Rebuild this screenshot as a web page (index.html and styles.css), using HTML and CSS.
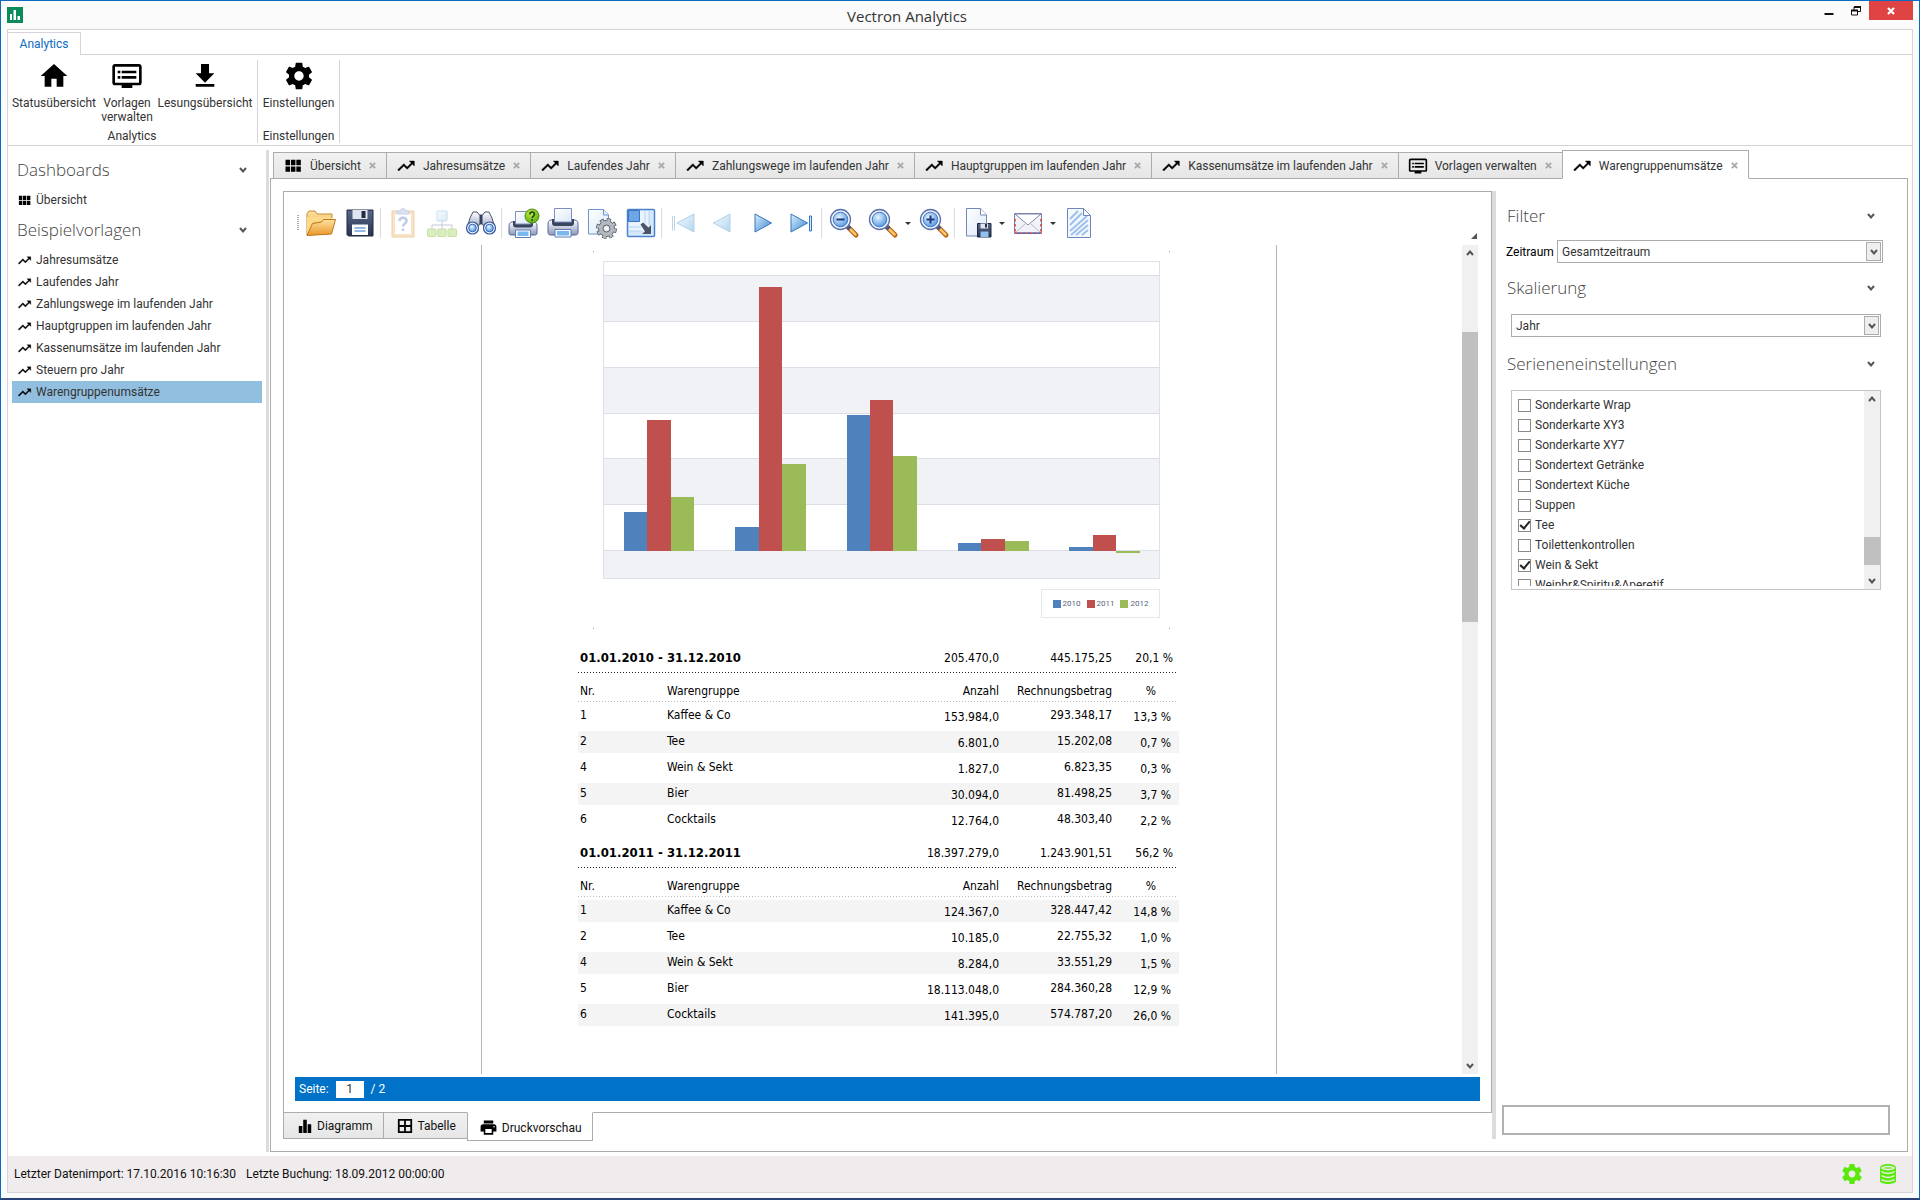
FILE: index.html
```html
<!DOCTYPE html>
<html lang="de">
<head>
<meta charset="utf-8">
<title>Vectron Analytics</title>
<link rel="stylesheet" href="styles.css">
</head>
<body>
<svg class="sprite" aria-hidden="true">
  <defs>
    <linearGradient id="g-blue" x1="0" y1="0" x2="1" y2="1"><stop offset="0" stop-color="#d9efff"/><stop offset="1" stop-color="#3f87d0"/></linearGradient>
    <linearGradient id="g-pale" x1="0" y1="0" x2="1" y2="1"><stop offset="0" stop-color="#f2f9fe"/><stop offset="1" stop-color="#b4d6ee"/></linearGradient>
    <linearGradient id="g-page" x1="0" y1="0" x2="1" y2="1"><stop offset="0" stop-color="#ffffff"/><stop offset="1" stop-color="#dbe8f8"/></linearGradient>
    <linearGradient id="g-gold" x1="0" y1="0" x2="0" y2="1"><stop offset="0" stop-color="#fee3a0"/><stop offset="1" stop-color="#e8962a"/></linearGradient>
    <linearGradient id="g-steel" x1="0" y1="0" x2="0" y2="1"><stop offset="0" stop-color="#ffffff"/><stop offset="1" stop-color="#8a97b8"/></linearGradient>
    <linearGradient id="g-navy" x1="0" y1="0" x2="0" y2="1"><stop offset="0" stop-color="#5a6888"/><stop offset="1" stop-color="#27324e"/></linearGradient>
    <radialGradient id="g-lens" cx=".4" cy=".35" r=".7"><stop offset="0" stop-color="#e6f6ff"/><stop offset="1" stop-color="#4c94e0"/></radialGradient>
    <radialGradient id="g-green" cx=".4" cy=".3" r=".8"><stop offset="0" stop-color="#b9ea4a"/><stop offset="1" stop-color="#57a80a"/></radialGradient>
  </defs>
  <symbol id="home" viewBox="0 0 24 24"><path d="M10 20v-6h4v6h5v-8h3L12 3 2 12h3v8z"/></symbol>
  <symbol id="dvr" viewBox="0 0 24 24"><path d="M21 3H3c-1.1 0-2 .9-2 2v12c0 1.1.9 2 2 2h5v2h8v-2h5c1.1 0 2-.9 2-2V5c0-1.1-.9-2-2-2zm0 14H3V5h18v12zm-2-9H8v2h11V8zm0 4H8v2h11v-2zM7 8H5v2h2V8zm0 4H5v2h2v-2z"/></symbol>
  <symbol id="download" viewBox="0 0 24 24"><path d="M19 10h-4V3H9v7H5l7 7 7-7zM5 18v2h14v-2H5z"/></symbol>
  <symbol id="gear" viewBox="0 0 24 24"><path d="M19.43 12.98c.04-.32.07-.64.07-.98s-.03-.66-.07-.98l2.11-1.65c.19-.15.24-.42.12-.64l-2-3.46c-.12-.22-.39-.3-.61-.22l-2.49 1c-.52-.4-1.08-.73-1.69-.98l-.38-2.65C14.46 2.18 14.25 2 14 2h-4c-.25 0-.46.18-.49.42l-.38 2.65c-.61.25-1.17.59-1.69.98l-2.49-1c-.23-.09-.49 0-.61.22l-2 3.46c-.13.22-.07.49.12.64l2.11 1.65c-.04.32-.07.65-.07.98s.03.66.07.98l-2.11 1.65c-.19.15-.24.42-.12.64l2 3.46c.12.22.39.3.61.22l2.49-1c.52.4 1.08.73 1.69.98l.38 2.65c.03.24.24.42.49.42h4c.25 0 .46-.18.49-.42l.38-2.65c.61-.25 1.17-.59 1.69-.98l2.49 1c.23.09.49 0 .61-.22l2-3.46c.12-.22.07-.49-.12-.64l-2.11-1.65zM12 15.5c-1.93 0-3.5-1.57-3.5-3.5s1.57-3.5 3.5-3.5 3.5 1.57 3.5 3.5-1.57 3.5-3.5 3.5z"/></symbol>
  <symbol id="trend" viewBox="0 0 24 24"><path d="M16 6l2.29 2.29-4.88 4.88-4-4L2 16.59 3.41 18l6-6 4 4 6.3-6.29L22 12V6z" stroke="#000" stroke-width=".5"/></symbol>
  <symbol id="modules" viewBox="0 0 24 24"><path d="M3 11h5.400V4.500H3zM3 19h5.400v-6.500H3zM9.500 19h5.400v-6.500H9.500zM16 19h5.400v-6.500H16zM9.500 11h5.400V4.500H9.500zM16 4.500V11h5.400V4.500z"/></symbol>
  <symbol id="bars" viewBox="0 0 18 18"><path d="M2 9h4v8H2zM7 2h4v15H7zM12 7h4v10h-4z"/></symbol>
  <symbol id="grid" viewBox="0 0 18 18"><path d="M1 1h16v16H1zM3 3v5h5V3zM10 3v5h5V3zM3 10v5h5v-5zM10 10v5h5v-5z" fill-rule="evenodd"/></symbol>
  <symbol id="print" viewBox="0 0 24 24"><path d="M19 8H5c-1.660 0-3 1.340-3 3v6h4v4h12v-4h4v-6c0-1.660-1.340-3-3-3zm-3 11H8v-5h8v5zm3-7c-.55 0-1-.45-1-1s.45-1 1-1 1 .45 1 1-.45 1-1 1zm-1-9H6v4h12V3z"/></symbol>
  <symbol id="down" viewBox="0 0 8 8"><path d="M1 2l3 3.500L7 2" fill="none" stroke="#555" stroke-width="2"/></symbol>
  <symbol id="up" viewBox="0 0 8 8"><path d="M1 6l3-3.500L7 6" fill="none" stroke="#555" stroke-width="2"/></symbol>
  <symbol id="cross" viewBox="0 0 8 8"><path d="M1 1l6 6M7 1L1 7" fill="none" stroke="currentColor" stroke-width="2.200"/></symbol>

  <symbol id="t-open" viewBox="0 0 32 32"><path d="M2 28V6.500L4 4h6l2 3h15v4" fill="url(#g-gold)" stroke="#c98a2b"/><path d="M2 28V10h23v4L9 15z" fill="#fdd98a"/><path d="M7.500 16.500l9-1.500 2-2.500h12L26.500 27 2 28.500z" fill="url(#g-gold)" stroke="#c07418"/></symbol>
  <symbol id="t-save" viewBox="0 0 32 32"><path d="M3 3h26v26H4.500L3 27.500z" fill="url(#g-navy)" stroke="#1f2942"/><path d="M8.500 3h15v9h-15z" fill="#dfe6f2"/><path d="M17.500 4h4v7h-4z" fill="#222c45"/><path d="M8 17.500h16V28H8z" fill="#fff"/><path d="M10.500 21h11M10.500 24h11" stroke="#6fa1dc" stroke-width="1.500"/></symbol>
  <symbol id="t-clip" viewBox="0 0 32 32"><g opacity=".5"><path d="M5 4h22v26H5z" fill="#f3c890" stroke="#dba65d"/><path d="M8 7h16v20H8z" fill="#fff"/><path d="M10 7V4h3c0-3 6-3 6 0h3v3z" fill="#b9c6e4" stroke="#92a4cf"/><path d="M12.500 14c0-4.500 7-4.500 7 0 0 3-3.500 2.500-3.500 5.500M16 21.500V24" fill="none" stroke="#7f99d2" stroke-width="2.500"/></g></symbol>
  <symbol id="t-tree" viewBox="0 0 32 32"><g opacity=".5"><path d="M16 14v4M6 22v-4h20v4M16 18v4" fill="none" stroke="#8b97b5"/><rect x="11" y="4" width="10" height="10" rx="1" fill="url(#g-pale)" stroke="#8fbfe4"/><rect x="1.500" y="22" width="8.500" height="7.500" rx="1" fill="#b7dc7c" stroke="#95c157"/><rect x="11.700" y="22" width="8.500" height="7.500" rx="1" fill="#b7dc7c" stroke="#95c157"/><rect x="22" y="22" width="8.500" height="7.500" rx="1" fill="#b7dc7c" stroke="#95c157"/></g></symbol>
  <symbol id="t-find" viewBox="0 0 32 32"><path d="M5 11l3-6h4l2.500 3h3L20 5h4l3 6 3 10-9 3-3.500-7h-3L11 24l-9-3z" fill="url(#g-steel)" stroke="#46536f"/><path d="M14.500 8h3v9h-3z" fill="#35405c"/><circle cx="7.500" cy="21" r="6" fill="#eef3fb" stroke="#34539c" stroke-width="1.200"/><circle cx="7.500" cy="21" r="3.800" fill="url(#g-lens)" stroke="#3567b8"/><circle cx="24.500" cy="21" r="6" fill="#eef3fb" stroke="#34539c" stroke-width="1.200"/><circle cx="24.500" cy="21" r="3.800" fill="url(#g-lens)" stroke="#3567b8"/></symbol>
  <symbol id="t-print" viewBox="0 0 32 32"><path d="M4 13h24c2 0 3 2 3 4.500v8c0 1.500-1 2.500-2.500 2.500h-25C2 28 1 27 1 25.500v-8C1 15 2 13 4 13z" fill="url(#g-steel)" stroke="#56659a"/><path d="M5 12h22v4c0 2-1 3-3 3H8c-2 0-3-1-3-3z" fill="#39445f"/><path d="M7.500 15V1.500h17V15z" fill="url(#g-page)" stroke="#7c8fbd"/><path d="M8 22.500h16v7.500H8z" fill="#fff" stroke="#5f78b8"/><path d="M10 24h12v4.500H10z" fill="#79b8ee"/></symbol>
  <symbol id="t-printq" viewBox="0 0 32 32"><path d="M4 15h22c2 0 3 2 3 4.500V26c0 1.500-1 2-2.500 2h-23C2 28 1 27.500 1 26v-6.500C1 17 2 15 4 15z" fill="url(#g-steel)" stroke="#56659a"/><path d="M5 14h20v3.500c0 2-1 3-3 3H8c-2 0-3-1-3-3z" fill="#39445f"/><path d="M7.500 17V4.500h15V17z" fill="url(#g-page)" stroke="#7c8fbd"/><path d="M7.500 23h15v7.500h-15z" fill="#fff" stroke="#5f78b8"/><path d="M9.500 24.500h11v4.500h-11z" fill="#79b8ee"/><circle cx="24" cy="9" r="7" fill="url(#g-green)" stroke="#4c8f10"/><path d="M21.800 7.500c0-3.300 4.600-3.300 4.600 0 0 1.800-2.300 1.800-2.300 3.500M24.100 12v1.800" fill="none" stroke="#26450a" stroke-width="1.600"/></symbol>
  <symbol id="t-setup" viewBox="0 0 32 32"><path d="M2.500 2.500h15l5 5.500v19h-20z" fill="url(#g-page)" stroke="#6d93cf"/><path d="M17.500 2.500V8h5" fill="#e8f1fc" stroke="#6d93cf"/><circle cx="20.500" cy="21.500" r="8.200" fill="none" stroke="#5a6069" stroke-width="4.600" stroke-dasharray="3.800 2.640"/><circle cx="20.500" cy="21.500" r="8" fill="#b4b9c1" stroke="#5a6069"/><circle cx="20.500" cy="21.500" r="8.200" fill="none" stroke="#b4b9c1" stroke-width="3" stroke-dasharray="2.600 3.840" stroke-dashoffset="-.6"/><circle cx="20.500" cy="21.500" r="3.500" fill="#e6e9ee" stroke="#5a6069"/><circle cx="20.500" cy="21.500" r="1.400" fill="#fff"/></symbol>
  <symbol id="t-scale" viewBox="0 0 32 32"><rect x="2.500" y="2.500" width="27" height="27" rx="1" fill="#d6e8fb" stroke="#4a83cc" stroke-width="1.500"/><path d="M4 4h20v20H4z" fill="#e8f3fe"/><path d="M20 4v14M24 4v14M4 20h12M4 24h12" stroke="#b3d3f4"/><path d="M3.500 3.500h11v11h-11z" fill="#6ea5e6" stroke="#3c74c2"/><path d="M15.500 17.500l2.500-2 5.500 5 2.500-2.500V27H17l3-2.500z" fill="#4a5464"/></symbol>
  <symbol id="t-first" viewBox="0 0 32 32"><path d="M6.500 9v14.500M4.500 9v14.500" stroke="#b7d6ec"/><path d="M26 7v18L9 16z" fill="url(#g-pale)" stroke="#b0d0e8"/></symbol>
  <symbol id="t-prev" viewBox="0 0 32 32"><path d="M23 7v18L6.500 16z" fill="url(#g-pale)" stroke="#b0d0e8"/></symbol>
  <symbol id="t-next" viewBox="0 0 32 32"><path d="M9 7v18l16.500-9z" fill="url(#g-blue)" stroke="#3676bd"/></symbol>
  <symbol id="t-last" viewBox="0 0 32 32"><path d="M6 7v18l16.500-9z" fill="url(#g-blue)" stroke="#3676bd"/><path d="M24.500 9h2v15h-2z" fill="#d4ecff" stroke="#3676bd"/></symbol>
  <symbol id="t-lens" viewBox="0 0 32 32"><path d="M20 20l8 8" stroke="#b5651a" stroke-width="5" stroke-linecap="round"/><path d="M20 20l7.500 7.500" stroke="#fcc766" stroke-width="2.500" stroke-linecap="round"/><path d="M19 19l3 3" stroke="#4a5680" stroke-width="4"/><circle cx="12.500" cy="12.500" r="10" fill="#f0f5fc" stroke="#5a71ab" stroke-width="1.300"/><circle cx="12.500" cy="12.500" r="7.300" fill="url(#g-lens)" stroke="#4676c4"/></symbol>
  <symbol id="t-export" viewBox="0 0 32 32"><path d="M5.500 1.500h14l6 6.500v21h-20z" fill="url(#g-page)" stroke="#7488b8"/><path d="M19.500 1.500V8h6" fill="#fff" stroke="#7488b8"/><path d="M16.500 16.500H30V30H16.500z" fill="url(#g-navy)" stroke="#1f2942"/><path d="M19.500 16.500H27v5h-7.500z" fill="#dfe6f2"/><path d="M24 17h2v3.500h-2z" fill="#222c45"/><path d="M19.500 24.500h8V30h-8z" fill="#8fc0ee"/></symbol>
  <symbol id="t-mail" viewBox="0 0 32 32"><path d="M2.500 6.500h27v20h-27z" fill="#f2f3f8" stroke="#7580a8"/><path d="M3 26l10-9M29 26l-10-9" stroke="#b4b9cc"/><path d="M3 7l13 11L29 7z" fill="#fff" stroke="#8088a8"/><path d="M3 26h26M3 12v14M29 12v14" stroke="#d8443c" stroke-width="1.600" stroke-dasharray="2.500 2.500"/><path d="M5.500 26h24" stroke="#3a6ac8" stroke-width="1.600" stroke-dasharray="2.500 2.500"/></symbol>
  <symbol id="t-water" viewBox="0 0 32 32"><path d="M4.500 1.500h16l7 7v22h-23z" fill="#f3f8fe" stroke="#6f84ba"/><path d="M7 12L15 4M7 18L19 6M7 24L24 9M8 28L25 13M13 28l12-10M19 28l6-5" stroke="#9cc0ea" stroke-width="2"/><path d="M20.500 1.500v7h7z" fill="#fff" stroke="#6f84ba"/></symbol>
</svg>

<div class="window">
  <header class="titlebar">
    <svg class="logo" viewBox="0 0 16 16"><path fill="#0b8a5c" d="M0 0h16v16H0z"/><path fill="#fff" d="M3 7h2v6H3zM6.500 3h2.500v10H6.500zM10.500 9H13v4h-2.500z"/></svg>
    <h1 class="title">Vectron Analytics</h1>
    <div class="winbuttons">
      <button class="winbtn" aria-label="Minimieren"><svg width="12" height="12" viewBox="0 0 12 12"><path d="M1.500 8h9v2h-9z" fill="#111"/></svg></button>
      <button class="winbtn" aria-label="Wiederherstellen"><svg width="12" height="12" viewBox="0 0 12 12"><path d="M4 5V2h6.500v4.500H8" fill="none" stroke="#111"/><path d="M4 2h7" stroke="#111" stroke-width="2"/><path d="M1.500 5.500h6V10h-6z" fill="#fff" stroke="#111"/><path d="M1 5.500h7" stroke="#111" stroke-width="2"/></svg></button>
      <button class="winbtn winclose" aria-label="Schließen"><svg width="8" height="8"><use href="#cross"/></svg></button>
    </div>
  </header>

  <div class="frame">
    <nav class="ribbon-tabs"><button class="ribbon-tab">Analytics</button></nav>
    <section class="ribbon">
      <div class="group">
        <div class="group-items">
          <button class="big w86"><svg><use href="#home"/></svg>Statusübersicht</button>
          <button class="big w60"><svg><use href="#dvr"/></svg>Vorlagen<br>verwalten</button>
          <button class="big w96"><svg><use href="#download"/></svg>Lesungsübersicht</button>
        </div>
        <div class="group-label">Analytics</div>
      </div>
      <div class="group">
        <div class="group-items"><button class="big w80"><svg><use href="#gear"/></svg>Einstellungen</button></div>
        <div class="group-label">Einstellungen</div>
      </div>
    </section>

    <div class="main">
      <aside class="sidebar">
        <h2 class="heading">Dashboards<svg><use href="#down"/></svg></h2>
        <ul class="links"><li><a href="#"><svg><use href="#modules"/></svg>Übersicht</a></li></ul>
        <h2 class="heading">Beispielvorlagen<svg><use href="#down"/></svg></h2>
        <ul class="links">
          <li><a href="#"><svg><use href="#trend"/></svg>Jahresumsätze</a></li>
          <li><a href="#"><svg><use href="#trend"/></svg>Laufendes Jahr</a></li>
          <li><a href="#"><svg><use href="#trend"/></svg>Zahlungswege im laufenden Jahr</a></li>
          <li><a href="#"><svg><use href="#trend"/></svg>Hauptgruppen im laufenden Jahr</a></li>
          <li><a href="#"><svg><use href="#trend"/></svg>Kassenumsätze im laufenden Jahr</a></li>
          <li><a href="#"><svg><use href="#trend"/></svg>Steuern pro Jahr</a></li>
          <li><a href="#" class="selected"><svg><use href="#trend"/></svg>Warengruppenumsätze</a></li>
        </ul>
      </aside>

      <div class="workspace">
        <nav class="tabs">
          <button class="tab"><svg class="ti"><use href="#modules"/></svg><span>Übersicht</span><svg class="x"><use href="#cross"/></svg></button>
          <button class="tab"><svg class="ti"><use href="#trend"/></svg><span>Jahresumsätze</span><svg class="x"><use href="#cross"/></svg></button>
          <button class="tab"><svg class="ti"><use href="#trend"/></svg><span>Laufendes Jahr</span><svg class="x"><use href="#cross"/></svg></button>
          <button class="tab"><svg class="ti"><use href="#trend"/></svg><span>Zahlungswege im laufenden Jahr</span><svg class="x"><use href="#cross"/></svg></button>
          <button class="tab"><svg class="ti"><use href="#trend"/></svg><span>Hauptgruppen im laufenden Jahr</span><svg class="x"><use href="#cross"/></svg></button>
          <button class="tab"><svg class="ti"><use href="#trend"/></svg><span>Kassenumsätze im laufenden Jahr</span><svg class="x"><use href="#cross"/></svg></button>
          <button class="tab"><svg class="ti"><use href="#dvr"/></svg><span>Vorlagen verwalten</span><svg class="x"><use href="#cross"/></svg></button>
          <button class="tab active"><svg class="ti"><use href="#trend"/></svg><span>Warengruppenumsätze</span><svg class="x"><use href="#cross"/></svg></button>
        </nav>

        <div class="content">
          <div class="document">
            <div class="panel">
              <div class="toolbar">
                <span class="grip"></span>
                <button class="tool" aria-label="Öffnen"><svg><use href="#t-open"/></svg></button>
                <button class="tool" aria-label="Speichern"><svg><use href="#t-save"/></svg></button>
                <span class="sep"></span>
                <button class="tool" aria-label="Parameter" disabled><svg><use href="#t-clip"/></svg></button>
                <button class="tool" aria-label="Struktur" disabled><svg><use href="#t-tree"/></svg></button>
                <button class="tool" aria-label="Suchen"><svg><use href="#t-find"/></svg></button>
                <span class="sep"></span>
                <button class="tool" aria-label="Drucken mit Auswahl"><svg><use href="#t-printq"/></svg></button>
                <button class="tool" aria-label="Drucken"><svg><use href="#t-print"/></svg></button>
                <button class="tool" aria-label="Seite einrichten"><svg><use href="#t-setup"/></svg></button>
                <button class="tool" aria-label="Skalieren"><svg><use href="#t-scale"/></svg></button>
                <span class="sep"></span>
                <button class="tool" aria-label="Erste Seite" disabled><svg><use href="#t-first"/></svg></button>
                <button class="tool" aria-label="Vorherige Seite" disabled><svg><use href="#t-prev"/></svg></button>
                <button class="tool" aria-label="Nächste Seite"><svg><use href="#t-next"/></svg></button>
                <button class="tool" aria-label="Letzte Seite"><svg><use href="#t-last"/></svg></button>
                <span class="sep"></span>
                <button class="tool" aria-label="Verkleinern"><svg viewBox="0 0 32 32"><use href="#t-lens"/><path d="M8.500 12.500h8" stroke="#23367c" stroke-width="2"/></svg></button>
                <button class="tool" aria-label="Zoom"><svg><use href="#t-lens"/></svg></button>
                <button class="drop" aria-label="Zoomstufen"></button>
                <button class="tool" aria-label="Vergrößern"><svg viewBox="0 0 32 32"><use href="#t-lens"/><path d="M8.500 12.500h8M12.500 8.500v8" stroke="#23367c" stroke-width="2"/></svg></button>
                <span class="sep"></span>
                <button class="tool" aria-label="Exportieren"><svg><use href="#t-export"/></svg></button>
                <button class="drop" aria-label="Exportformate"></button>
                <button class="tool" aria-label="Senden"><svg><use href="#t-mail"/></svg></button>
                <button class="drop" aria-label="Sendeformate"></button>
                <button class="tool" aria-label="Wasserzeichen"><svg><use href="#t-water"/></svg></button>
                <svg class="overflow" viewBox="0 0 6 6"><path d="M6 0v6H0z" fill="#555"/></svg>
              </div>

              <div class="preview">
                <div class="canvas">
                  <div class="page">
                    <figure class="chart">
                      <svg viewBox="0 0 577 378" shape-rendering="crispEdges">
                        <path d="M0 0h1v1H0zM576 0h1v1h-1zM0 377h1v1H0zM576 377h1v1h-1z" fill="#999"/>
                        <path d="M11 24h556v46H11zM11 116h556v46H11zM11 207h556v46H11zM11 299h556v29H11z" fill="#f1f2f6"/>
                        <path d="M11 24.500h556M11 70.500h556M11 116.500h556M11 162.500h556M11 207.500h556M11 253.500h556M11 299.500h556" stroke="#dadfe8"/>
                        <path d="M10.500 10.500h556v317h-556z" fill="none" stroke="#dde1ea"/>
                        <path d="M31 261h23v39H31zM142 276h24v24h-24zM254 164h23v136h-23zM365 292h23v8h-23zM476 296h24v4h-24z" fill="#4f81bd"/>
                        <path d="M54 169h24v131H54zM166 36h23v264h-23zM277 149h23v151h-23zM388 288h24v12h-24zM500 284h23v16h-23z" fill="#c0504d"/>
                        <path d="M78 246h23v54H78zM189 213h24v87h-24zM300 205h24v95h-24zM412 290h24v10h-24zM523 300h24v2h-24z" fill="#9bbb59"/>
                      </svg>
                      <figcaption class="legend"><span class="key k10">2010</span><span class="key k11">2011</span><span class="key k12">2012</span></figcaption>
                    </figure>

                    <table class="report">
                      <colgroup><col class="c1"><col class="c2"><col class="c3"><col class="c4"><col class="c5"></colgroup>
                      <thead>
                        <tr class="period"><th colspan="2">01.01.2010 - 31.12.2010</th><td>205.470,0</td><td>445.175,25</td><td>20,1 %</td></tr>
                        <tr class="cols"><th>Nr.</th><th>Warengruppe</th><th>Anzahl</th><th>Rechnungsbetrag</th><th>%</th></tr>
                      </thead>
                      <tbody>
                        <tr><td>1</td><td>Kaffee &amp; Co</td><td>153.984,0</td><td>293.348,17</td><td>13,3 %</td></tr>
                        <tr class="alt"><td>2</td><td>Tee</td><td>6.801,0</td><td>15.202,08</td><td>0,7 %</td></tr>
                        <tr><td>4</td><td>Wein &amp; Sekt</td><td>1.827,0</td><td>6.823,35</td><td>0,3 %</td></tr>
                        <tr class="alt"><td>5</td><td>Bier</td><td>30.094,0</td><td>81.498,25</td><td>3,7 %</td></tr>
                        <tr><td>6</td><td>Cocktails</td><td>12.764,0</td><td>48.303,40</td><td>2,2 %</td></tr>
                      </tbody>
                    </table>
                    <table class="report">
                      <colgroup><col class="c1"><col class="c2"><col class="c3"><col class="c4"><col class="c5"></colgroup>
                      <thead>
                        <tr class="period"><th colspan="2">01.01.2011 - 31.12.2011</th><td>18.397.279,0</td><td>1.243.901,51</td><td>56,2 %</td></tr>
                        <tr class="cols"><th>Nr.</th><th>Warengruppe</th><th>Anzahl</th><th>Rechnungsbetrag</th><th>%</th></tr>
                      </thead>
                      <tbody>
                        <tr class="alt"><td>1</td><td>Kaffee &amp; Co</td><td>124.367,0</td><td>328.447,42</td><td>14,8 %</td></tr>
                        <tr><td>2</td><td>Tee</td><td>10.185,0</td><td>22.755,32</td><td>1,0 %</td></tr>
                        <tr class="alt"><td>4</td><td>Wein &amp; Sekt</td><td>8.284,0</td><td>33.551,29</td><td>1,5 %</td></tr>
                        <tr><td>5</td><td>Bier</td><td>18.113.048,0</td><td>284.360,28</td><td>12,9 %</td></tr>
                        <tr class="alt"><td>6</td><td>Cocktails</td><td>141.395,0</td><td>574.787,20</td><td>26,0 %</td></tr>
                      </tbody>
                    </table>
                  </div>
                </div>
                <div class="scrollbar"><svg><use href="#up"/></svg><div class="track"><span class="before-doc"></span><span class="thumb-doc"></span></div><svg><use href="#down"/></svg></div>
              </div>

              <div class="pager"><label for="seite">Seite:</label><input id="seite" type="text" value="1"><span>/ 2</span></div>
            </div>

            <nav class="views">
              <button class="view"><svg><use href="#bars"/></svg>Diagramm</button>
              <button class="view"><svg><use href="#grid"/></svg>Tabelle</button>
              <button class="view active"><svg><use href="#print"/></svg>Druckvorschau</button>
            </nav>
          </div>

          <aside class="settings">
            <h2 class="heading">Filter<svg><use href="#down"/></svg></h2>
            <div class="field">
              <label for="zeitraum">Zeitraum</label>
              <div class="combo"><select id="zeitraum"><option>Gesamtzeitraum</option></select><span class="combo-btn"><svg><use href="#down"/></svg></span></div>
            </div>
            <h2 class="heading">Skalierung<svg><use href="#down"/></svg></h2>
            <div class="combo inset"><select aria-label="Skalierung"><option>Jahr</option></select><span class="combo-btn"><svg><use href="#down"/></svg></span></div>
            <h2 class="heading">Serieneneinstellungen<svg><use href="#down"/></svg></h2>
            <div class="listbox">
              <div class="checks">
                <label><input type="checkbox">Sonderkarte Wrap</label>
                <label><input type="checkbox">Sonderkarte XY3</label>
                <label><input type="checkbox">Sonderkarte XY7</label>
                <label><input type="checkbox">Sondertext Getränke</label>
                <label><input type="checkbox">Sondertext Küche</label>
                <label><input type="checkbox">Suppen</label>
                <label><input type="checkbox" checked>Tee</label>
                <label><input type="checkbox">Toilettenkontrollen</label>
                <label><input type="checkbox" checked>Wein &amp; Sekt</label>
                <label><input type="checkbox">Weinbr&amp;Spiritu&amp;Aperetif</label>
              </div>
              <div class="scrollbar"><svg><use href="#up"/></svg><div class="track"><span class="before-list"></span><span class="thumb-list"></span></div><svg><use href="#down"/></svg></div>
            </div>
            <input class="note" type="text" aria-label="Eingabe">
          </aside>
        </div>
      </div>
    </div>

    <footer class="status">
      <span>Letzter Datenimport: 17.10.2016 10:16:30</span>
      <span>Letzte Buchung: 18.09.2012 00:00:00</span>
      <div class="status-icons">
        <svg width="24" height="24" fill="#5be80c"><use href="#gear"/></svg>
        <svg width="16" height="20" viewBox="0 0 16 20"><path d="M0 4v13c0 4 16 4 16 0V4z" fill="#5be80c"/><ellipse cx="8" cy="3.500" rx="8" ry="3.500" fill="#5be80c"/><path d="M2 4c2-2 10-2 12 0-2 2-10 2-12 0zM1.500 7.500c3 2.500 10 2.500 13 0M1.500 11.500c3 2.500 10 2.500 13 0M1.500 15.500c3 2.500 10 2.500 13 0" fill="none" stroke="#f0eced" stroke-width="1.400"/></svg>
      </div>
    </footer>
  </div>
</div>
</body>
</html>
```
FILE: styles.css
```css
* { box-sizing: border-box; }

body {
  margin: 0;
  font: 12px/16px Roboto, "Noto Sans", sans-serif;
  color: #333;
  background: #fff;
}

button, input, select { font: inherit; color: inherit; margin: 0; padding: 0; }
button { background: none; border: 0; }
h1, h2, ul, figure { margin: 0; padding: 0; font-weight: 400; }
svg { display: block; flex: none; }
.sprite { position: absolute; width: 0; height: 0; }

.window {
  display: flex;
  flex-direction: column;
  height: 100vh;
  min-height: 700px;
  padding: 0 6px 5px;
  background: #fbfbfb;
  border: 1px solid #0a6cc0;
  border-bottom: 2px solid #2a4375;
}

.titlebar { display: flex; height: 28px; align-items: flex-start; }
.logo { width: 16px; height: 16px; margin-top: 6px; }
.title { flex: 1; text-align: center; font: 15px/30px "Open Sans", sans-serif; padding-right: 24px; color: #333; }
.winbuttons { display: flex; }
.winbtn { display: grid; place-items: center; width: 27px; height: 19px; }
.winclose { width: 44px; height: 19px; background: #e04343; color: #fff; }

.frame {
  flex: 1;
  min-height: 0;
  display: flex;
  flex-direction: column;
  background: #fff;
  border: 1px solid #d5d5d9;
}

.ribbon-tabs { display: flex; height: 25px; padding-top: 2px; border-bottom: 1px solid #d5d5d9; }
.ribbon-tab {
  width: 73px;
  height: 23px;
  margin-bottom: -1px;
  color: #0a6cc0;
  background: #fff;
  border: 1px solid #d5d5d9;
  border-bottom: 0;
  border-left: 0;
}

.ribbon { display: flex; height: 91px; padding: 5px 0 2px 3px; border-bottom: 1px solid #d5d5d9; }
.group { display: flex; flex-direction: column; justify-content: space-between; padding-right: 4px; border-right: 1px solid #d5d5d9; }
.group + .group { padding: 0; }
.group-items { display: flex; align-items: flex-start; }
.group-label { text-align: center; line-height: 14px; }
.big { display: flex; flex-direction: column; align-items: center; line-height: 14px; white-space: nowrap; }
.big svg { width: 32px; height: 32px; margin-bottom: 4px; }
.w60 { width: 60px; }
.w80 { width: 81px; }
.w86 { width: 86px; }
.w96 { width: 96px; }

.main { flex: 1; min-height: 0; display: flex; padding: 4px; }

.sidebar { flex: none; width: 257px; padding: 1px 4px 0 0; border-right: 3px solid #dcdcdc; }
.heading {
  display: flex;
  align-items: center;
  justify-content: space-between;
  height: 38px;
  padding: 0 15px 0 5px;
  font-family: "Open Sans", sans-serif;
  font-size: 17px;
  font-weight: 300;
  color: #444;
}
.heading svg { width: 8px; height: 8px; }
.links { list-style: none; }
.links a { display: flex; align-items: center; gap: 4px; height: 22px; padding-left: 5px; color: inherit; text-decoration: none; }
.links svg { width: 15px; height: 15px; }
.links .selected { background: #92bfe0; }

.workspace { flex: 1; min-width: 0; display: flex; flex-direction: column; padding-left: 1px; }
.tabs { display: flex; align-items: flex-end; height: 29px; padding-left: 3px; }
.tab {
  display: flex;
  align-items: center;
  height: 27px;
  padding: 0 10px 0 9px;
  white-space: nowrap;
  background: linear-gradient(#f1f1f1, #e6e6e6);
  border: 1px solid #acacac;
  border-right: 0;
}
.tab .ti { width: 20px; height: 20px; margin-right: 7px; }
.tab .x { width: 7px; height: 7px; margin-left: 8px; color: #aaa; }
.tab.active { position: relative; height: 29px; padding-top: 2px; background: #fff; border-right: 1px solid #acacac; border-bottom-color: #fff; }

.content { flex: 1; min-height: 0; display: flex; margin-top: -1px; padding: 12px 0 12px 12px; border: 1px solid #acacac; }

.document { flex: 1; min-width: 0; display: flex; flex-direction: column; }
.panel { flex: 1; min-height: 0; display: flex; flex-direction: column; padding: 0 11px 11px; border: 1px solid #acacac; }

.toolbar { display: flex; align-items: center; height: 53px; padding: 9px 3px 0 2px; }
.grip { width: 2px; height: 16px; margin-right: 2px; background: repeating-linear-gradient(#aaa 0 1px, transparent 1px 2px); }
.tool { display: grid; place-items: center; width: 39px; height: 32px; }
.tool svg { width: 32px; height: 32px; }
.sep { width: 1px; height: 30px; margin: 0 2px 0 1px; background: #dcdcdc; }
.drop { display: grid; place-items: center; width: 12px; height: 32px; }
.drop::before { content: ""; border: 3px solid transparent; border-top-color: #333; border-bottom: 0; }
.overflow { width: 6px; height: 6px; margin: 26px 0 0 auto; }

.preview { flex: 1; min-height: 0; display: flex; margin-right: 2px; }
.canvas { flex: 1; min-width: 0; display: flex; justify-content: center; padding-left: 1px; overflow: hidden; }
.page { width: 796px; padding: 6px 0 0 96px; overflow: hidden; border: 1px solid #b5b5b5; border-width: 0 1px; }

.chart { width: 577px; margin: 0 0 16px 15px; }
.chart svg { width: 577px; height: 378px; }
.legend {
  display: flex;
  align-items: center;
  justify-content: center;
  gap: 6px;
  width: 119px;
  height: 29px;
  margin: -40px 10px 0 auto;
  font-size: 8px;
  color: #56627c;
  border: 1px solid #e3e8ee;
}
.key { display: flex; align-items: center; gap: 2px; }
.key::before { content: ""; width: 8px; height: 8px; background: currentColor; }
.k10::before { background: #4f81bd; }
.k11::before { background: #c0504d; }
.k12::before { background: #9bbb59; }

.chart + .report { margin-top: 27px; }
.report {
  width: 601px;
  margin-bottom: 5px;
  table-layout: fixed;
  border-spacing: 0;
  font: 12px/16px "DejaVu Sans Condensed", "DejaVu Sans", sans-serif;
  color: #000;
}
.c1 { width: 89px; }
.c2 { width: 212px; }
.c3 { width: 120px; }
.c4 { width: 113px; }
.c5 { width: 67px; }
.report th, .report td { padding: 0; text-align: right; font-weight: 400; vertical-align: top; }
.report th:first-child, .report td:first-child { padding-left: 2px; }
.report tr > :nth-child(1), .report tr:not(.period) > :nth-child(2) { text-align: left; }
.report .period { background: repeating-linear-gradient(90deg, #222 0 1px, transparent 1px 3px) 0 100% / 598px 1px no-repeat; }
.report .period > * { height: 28px; padding-top: 5px; }
.report .period th { font-size: 13px; font-weight: 700; }
.report .period > :last-child { padding-right: 6px; }
.report .cols { background: repeating-linear-gradient(90deg, #bbb 0 1px, transparent 1px 3px) 0 100% / 598px 1px no-repeat; }
.report .cols th { height: 29px; padding-top: 10px; }
.report .cols th:last-child { padding-right: 23px; }
.report tbody td { height: 26px; padding-top: 2px; border-bottom: 4px solid #fff; }
.report tbody td:nth-child(3), .report tbody td:nth-child(5) { padding-top: 4px; }
.report tbody td:last-child { padding-right: 8px; }
.report tbody::before { content: ""; display: table-row; height: 3px; }
.report .alt td { background: #f4f4f4; }

.scrollbar { flex: none; display: flex; flex-direction: column; align-items: center; width: 16px; padding: 4px 0; background: #f0f0f0; }
.scrollbar svg { width: 8px; height: 8px; }
.track { flex: 1; align-self: stretch; display: flex; flex-direction: column; }
.before-doc { height: 9%; margin-top: 3px; }
.thumb-doc { height: 36%; background: #c0c0c0; }
.before-list { height: 77%; }
.thumb-list { height: 28px; background: #c0c0c0; }

.pager { display: flex; align-items: center; height: 24px; margin-top: 3px; padding-left: 4px; color: #fff; background: #0072c8; }
.pager input { width: 28px; height: 17px; margin: 0 7px; text-align: center; color: #333; background: #fff; border: 0; }

.views { display: flex; align-items: flex-start; height: 27px; margin-top: -1px; }
.view {
  display: flex;
  align-items: center;
  gap: 4px;
  height: 27px;
  padding: 0 11px 0 13px;
  color: #111;
  background: linear-gradient(#f1f1f1, #e6e6e6);
  border: 1px solid #acacac;
  border-right: 0;
}
.view svg { width: 16px; height: 16px; }
.view.active { height: 29px; padding: 2px 10px 0 11px; background: #fff; border-right: 1px solid #acacac; border-top-color: #fff; }
.view.active svg { width: 19px; height: 19px; }

.settings { flex: none; display: flex; flex-direction: column; width: 415px; padding: 6px 17px 4px 6px; border-left: 4px solid #dcdcdc; }
.settings .heading { padding: 0 15px 0 5px; }
.field { display: flex; align-items: center; gap: 2px; margin: 5px 7px 6px 4px; color: #000; }
.field label { width: 49px; }
.combo { flex: 1; display: grid; }
.combo > * { grid-area: 1 / 1; }
.combo select { width: 100%; height: 23px; padding-left: 4px; color: #333; background: #fff; border: 1px solid #acacac; border-radius: 0; appearance: none; }
.combo-btn { display: grid; place-items: center; align-self: center; justify-self: end; width: 15px; height: 19px; margin-right: 2px; background: #eee; border: 1px solid #acacac; pointer-events: none; }
.combo-btn svg { width: 8px; height: 8px; }
.inset { flex: none; margin: 7px 9px 8px; }
.listbox { display: flex; height: 200px; margin: 7px 9px; border: 1px solid #c4c4c4; }
.checks { flex: 1; padding: 4px 0 0 6px; overflow: hidden; margin-bottom: 3px; }
.checks label { display: flex; align-items: center; gap: 4px; height: 20px; }
.checks input { display: grid; place-items: center; width: 13px; height: 13px; appearance: none; background: #fff; border: 1px solid #8a8a8a; }
.checks input:checked::before { content: ""; width: 4px; height: 8px; margin-top: -2px; border: solid #222; border-width: 0 2px 2px 0; transform: rotate(40deg); }
.note { height: 30px; margin-top: auto; border: 2px solid #b2b2b2; background: #fff; }

.status { display: flex; align-items: center; gap: 10px; height: 36px; padding: 0 16px 0 6px; color: #111; background: #f0eced; }
.status-icons { display: flex; align-items: center; gap: 16px; margin-left: auto; }
```
